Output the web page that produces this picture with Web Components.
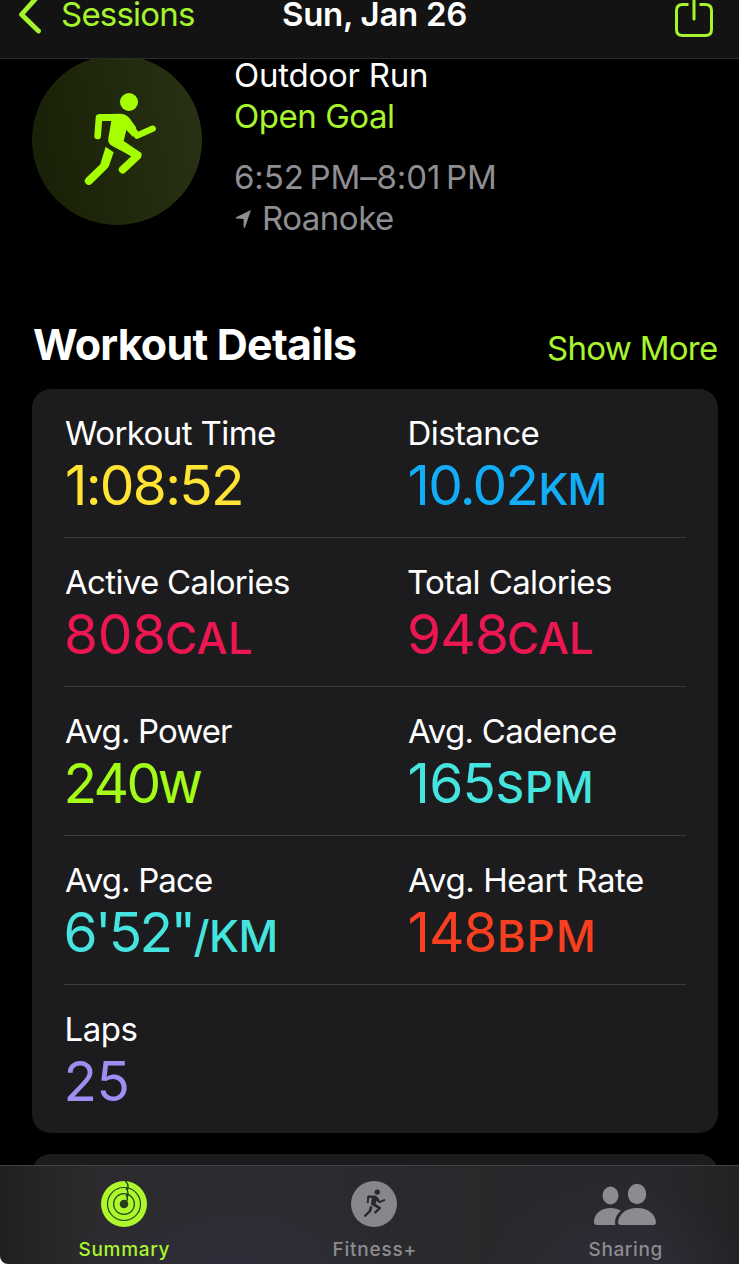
<!DOCTYPE html>
<html lang="en">
<head>
<meta charset="utf-8">
<title>Workout</title>
<style>
html,body{margin:0;background:#000}
body{width:739px;height:1264px;overflow:hidden;font-family:Inter,"Liberation Sans",sans-serif}
</style>
</head>
<body>
<workout-screen></workout-screen>
<script>
const define=(name,html,init)=>customElements.define(name,class extends HTMLElement{
  constructor(){super();this.attachShadow({mode:'open'}).innerHTML=typeof html==='function'?html(this):html}
  connectedCallback(){if(init)init(this)}
});

// Text tracked so that its glyphs span exactly the width given by "w".
const pen=document.createElement('canvas').getContext('2d');
define('fit-text','<style>:host{display:inline-block;white-space:nowrap}span{display:inline-block}</style><span><slot></slot></span>',el=>{
  const s=getComputedStyle(el),t=el.textContent,w=+el.getAttribute('w');
  pen.font=`${s.fontWeight} ${s.fontSize} ${s.fontFamily}`;
  const m=pen.measureText(t),ink=m.actualBoundingBoxLeft+m.actualBoundingBoxRight;
  const span=el.shadowRoot.querySelector('span');
  el.style.width=w+'px';
  span.style.marginLeft=m.actualBoundingBoxLeft+'px';
  if(t.length>1)span.style.letterSpacing=(w-ink)/(t.length-1)+'px';
});

define('runner-icon',`<style>:host{display:block}svg{display:block;width:100%;height:100%}</style>
<svg viewBox="0 0 270 330" fill="none" stroke="currentColor" stroke-linecap="round" stroke-linejoin="round">
<circle cx="162" cy="51" r="27" fill="currentColor" stroke="none"/>
<path d="M68 153L72 98H108" stroke-width="20"/>
<path d="M70 88L134 86Q152 86 163 99L184 128L174 156L154 135L146 168L200 205L186 221L113 184Q97 175 100 159L109 108L84 107Z" fill="currentColor" stroke="none"/>
<path d="M158 110L186 152L233 131" stroke-width="19"/>
<path d="M118 171L188 212L143 254" stroke-width="23"/>
<path d="M92 185L116 202L103 240Q101 247 95 252L50 296A12 12 0 0 1 33 279L76 238Z" fill="currentColor" stroke="none"/>
</svg>`);

define('nav-bar',`<style>
:host{display:grid;grid-template-columns:62px 221px 1fr auto;height:59px;box-sizing:border-box;background:#131313;border-bottom:1px solid #2b2b2b;font-size:33px;line-height:28px;color:#a5f52d}
.t{font-weight:600;color:#fff}
svg{display:block}.share{margin-right:25px}
</style>
<svg width="62" height="58" viewBox="0 0 62 58"><path d="M39-5L21.500 14.500L38.500 31" fill="none" stroke="currentColor" stroke-width="4.800" stroke-linecap="round" stroke-linejoin="round"/></svg>
<fit-text w="132">Sessions</fit-text><fit-text class="t" w="184">Sun, Jan 26</fit-text>
<svg class="share" width="40" height="58" viewBox="0 0 40 58" fill="none" stroke="currentColor" stroke-width="3" stroke-linecap="butt"><path d="M14.500 4.500H8.500Q2.500 4.500 2.500 10.500V29.500Q2.500 35.500 8.500 35.500H31.500Q37.500 35.500 37.500 29.500V10.500Q37.500 4.500 31.500 4.500H25.500"/><path d="M20-4V19" stroke-linecap="round"/></svg>`);

define('workout-hero',`<style>
:host{display:flex;height:170px;margin:-4px 0 0 32px;font-size:33px;line-height:41px;color:#8e8e93}
.disc{width:170px;height:170px;border-radius:50%;background:linear-gradient(80deg,#172006,#293214);display:flex}
runner-icon{width:90px;height:110px;margin:30px 0 0 43px}
.info{display:flex;flex-direction:column;margin:4px 0 0 33px}
.a{color:#fff;line-height:33px;margin-bottom:4px}.b{color:#a9f52c}.time{margin-top:20px}
.place{display:flex}.place svg{width:17px;height:20px;margin:11px 12px 0 0}
</style>
<div class="disc"><runner-icon style="color:#a6ff00"></runner-icon></div>
<div class="info">
<fit-text class="a" w="191">Outdoor Run</fit-text>
<fit-text class="b" w="158">Open Goal</fit-text>
<fit-text class="time" w="259">6:52\u2009PM–8:01\u2009PM</fit-text>
<div class="place"><svg viewBox="0 0 17 20"><path d="M16 1L10 18.500Q9 19.500 8.600 18V10L1.200 9.600Q0 9 1 8.200Z" fill="currentColor"/></svg><fit-text w="129">Roanoke</fit-text></div>
</div>`);

define('section-head',`<style>
:host{display:flex;justify-content:space-between;align-items:baseline;margin:93px 22px 0 34px;height:71px}
.h{font-size:43px;font-weight:700;line-height:52px;color:#fff}.m{font-size:33px;color:#a9f52c}
</style><fit-text class="h" w="322">Workout Details</fit-text><fit-text class="m" w="169">Show More</fit-text>`);

define('metric-cell',el=>{const a=n=>el.getAttribute(n);return `<style>
:host{display:block;padding-top:24px;color:#fff;font-size:33px;line-height:40px}
.l{display:block;margin-left:${a('ls')||-.5}px}
.v{display:flex;align-items:baseline;color:${a('color')};font-size:55px;line-height:60px;margin-top:2px;margin-left:${a('shift')||1}px}
.u{font-size:43.500px;font-weight:500;margin-left:${a('gap')||4}px}
</style><fit-text class="l" w="${a('lw')}">${a('label')}</fit-text>
<div class="v"><fit-text w="${a('vw')}">${a('value')}</fit-text>${a('unit')?`<fit-text class="u" w="${a('uw')}">${a('unit')}</fit-text>`:''}</div>`});

define('metric-row',`<style>
:host{display:grid;grid-template-columns:343px 1fr;height:149px;box-sizing:border-box;margin:0 32px;padding-left:1.500px;border-bottom:1px solid #3b3b3d}
:host(:last-of-type){border-bottom:0}
</style><slot></slot>`);

define('details-card',`<style>
:host{display:block;margin:0 21px 0 32px;background:#1c1c1e;border-radius:19px;height:744px}
</style>
<metric-row><metric-cell label="Workout Time" lw="210" value="1:08:52" vw="174" color="#ffe433" shift="1.5"></metric-cell><metric-cell label="Distance" lw="129" ls="1" value="10.02" vw="126" unit="KM" uw="63" gap="6" color="#12adf7"></metric-cell></metric-row>
<metric-row><metric-cell label="Active Calories" lw="224" value="808" vw="96" shift="1.5" unit="CAL" uw="84" color="#ec1652"></metric-cell><metric-cell label="Total Calories" lw="203" value="948" vw="96" shift="1.5" unit="CAL" uw="83" gap="3" color="#ec1652"></metric-cell></metric-row>
<metric-row><metric-cell label="Avg. Power" lw="167" value="240" vw="91" shift="2" unit="W" uw="39" gap="1" color="#a4fb18"></metric-cell><metric-cell label="Avg. Cadence" lw="208" value="165" vw="84" unit="SPM" uw="93" gap="4.5" color="#45e4df"></metric-cell></metric-row>
<metric-row><metric-cell label="Avg. Pace" lw="147" value="6'52&quot;" vw="124" unit="/KM" uw="82" gap="3" color="#45e4df"></metric-cell><metric-cell label="Avg. Heart Rate" lw="235" value="148" vw="85" unit="BPM" uw="93" gap="5.5" color="#f83f20"></metric-cell></metric-row>
<metric-row><metric-cell label="Laps" lw="70" ls="1" value="25" vw="60" shift="2" color="#9f8df2"></metric-cell></metric-row>`);

define('next-card','<style>:host{display:block;margin:21px 21px 0 32px;height:80px;border-radius:19px;background:#1c1c1e}</style>');

define('tab-item',el=>`<style>
:host{display:flex;flex-direction:column;align-items:center;width:120px;font-size:19px;line-height:24px;font-weight:500}
.i{display:flex;align-items:center;justify-content:center;height:46px;margin:15px 0 11px}
</style><div class="i"><slot></slot></div><fit-text w="${el.getAttribute('w')}">${el.getAttribute('label')}</fit-text>`);

define('tab-bar',`<style>
:host{display:grid;grid-template-columns:248px 252px 1fr;height:99px;box-sizing:border-box;border-top:1px solid #424244;border-bottom-left-radius:8px;color:#8c8b91;
background:radial-gradient(ellipse 160px 90px at 235px 110px,#302b3a,#302b3a00),radial-gradient(ellipse 130px 90px at 620px 110px,#2f2c38,#2f2c3800),linear-gradient(90deg,#202021,#2b2b2e 12%,#2c2c30 38%,#28292b 65%,#29292d 88%,#222224)}
tab-item{justify-self:center}tab-item:nth-of-type(3){margin-left:11px}svg{display:block}
.f{width:46px;height:46px;border-radius:50%;background:#87868b;color:#29292b;display:flex}
.f runner-icon{width:27px;height:33px;margin:6px 0 0 10px}
</style>
<tab-item label="Summary" w="91" style="color:#a9f52c"><svg width="46" height="46" viewBox="0 0 46 46" fill="none"><circle cx="23" cy="23" r="23" fill="#aef72c"/><g stroke="#1f4a18" stroke-width="1.200"><circle cx="23" cy="23" r="16.500"/><circle cx="23" cy="23" r="10.400"/><path d="M24 0Q27 2 27 6T25 7Q27 9 27 13T25 14Q27 16 26 20" stroke-width="1.500"/></g><circle cx="23" cy="23" r="4.300" fill="#263c1b"/></svg></tab-item>
<tab-item label="Fitness+" w="81" style="margin-right:0"><div class="f"><runner-icon></runner-icon></div></tab-item>
<tab-item label="Sharing" w="73"><svg width="62" height="46" viewBox="0 0 62 46" fill="currentColor"><ellipse cx="16.500" cy="14.500" rx="8" ry="9"/><ellipse cx="43" cy="13" rx="9.200" ry="10.200"/><path d="M3 44Q0 44 0 41C0 33 7 27 17 27Q23 27 27 29.500C23 33 21 37 21 41Q21 43 21.500 44Z"/><path d="M27 44Q24 44 24 41C25 33 32 27 43 27S61 33 62 41Q62 44 59 44Z"/></svg></tab-item>`);

define('workout-screen',`<style>
:host{display:grid;grid-template-rows:59px 1106px 99px;width:739px;height:1264px;background:linear-gradient(#000 1200px,#fff 1200px)}
main{overflow:hidden;background:#000}
tab-bar{background-clip:border-box}
</style><nav-bar></nav-bar><main><workout-hero></workout-hero><section-head></section-head><details-card></details-card><next-card></next-card></main><tab-bar></tab-bar>`);
</script>
</body>
</html>
